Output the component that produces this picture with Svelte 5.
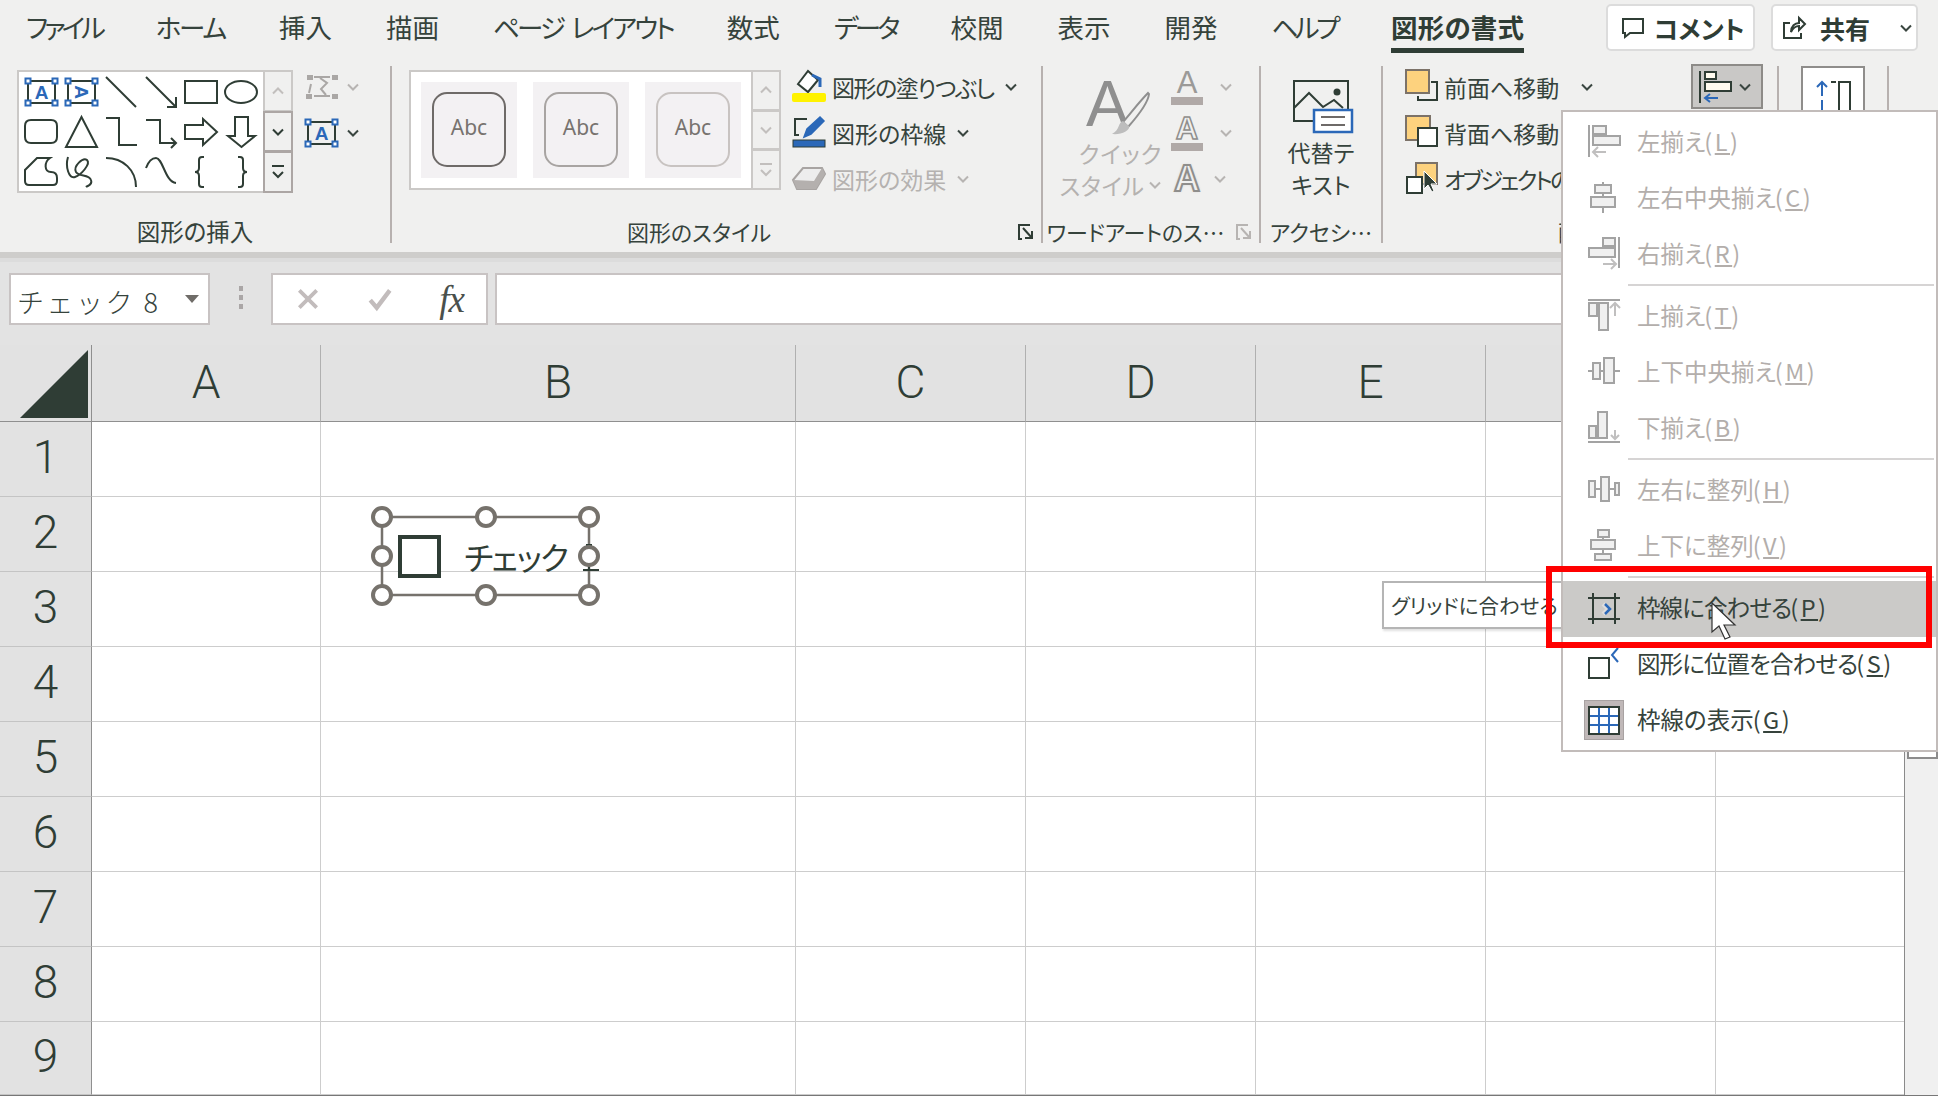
<script>
  // letter-spacing per tab: the kana in the original UI font run narrower than Noto's
  const tabs = [
    { name: 'ファイル', tight: -4 },
    { name: 'ホーム', tight: -2.2 },
    { name: '挿入', tight: 0 },
    { name: '描画', tight: 0 },
    { name: 'ページ レイアウト', tight: -2.8 },
    { name: '数式', tight: 0 },
    { name: 'データ', tight: -3.8 },
    { name: '校閲', tight: 0 },
    { name: '表示', tight: 0 },
    { name: '開発', tight: 0 },
    { name: 'ヘルプ', tight: -3.5 }
  ];

  // shape gallery: 6 x 3, drawn in a 40px cell
  const shapes = [
    { box: true },
    { box: true, turned: true },
    { d: 'M5 5L35 35' },
    { d: 'M5 5L35 35M35 25V35H26' },
    { d: 'M4 9H36V31H4Z' },
    { d: 'M4 20A16 11 0 1 0 36 20A16 11 0 1 0 4 20Z' },
    { d: 'M10 8H30Q36 8 36 14V25Q36 31 30 31H10Q4 31 4 25V14Q4 8 10 8Z' },
    { d: 'M20.5 5L36 35H5Z' },
    { d: 'M5 6H18V33H36' },
    { d: 'M5 8H19V31H35M30 26L35 31L30 36' },
    { d: 'M4 13H22V7L36 20L22 33V27H4Z' },
    { d: 'M14 5H27V24H34L20.5 35L7 24H14Z' },
    { d: 'M16 6H29C23 10 23 20 30 20C34 20 36 22 36 26V29Q36 33 32 33H8Q4 33 4 29V18Z' },
    { d: 'M7 5C4 15 8 27 14 25C20 23 30 12 26 8C22 5 12 14 15 20C18 25 28 22 30 28C32 33 26 34 25 35' },
    { d: 'M5 6C22 6 35 18 35 35' },
    { d: 'M5 16C8 8 12 6 15 6C22 6 24 30 35 31' },
    { d: 'M23 5H21Q18 5 18 8V16Q18 20 14 20Q18 20 18 24V32Q18 35 21 35H23' },
    { d: 'M17 5H19Q22 5 22 8V16Q22 20 26 20Q22 20 22 24V32Q22 35 19 35H17' }
  ];

  const swatches = ['#6e6a68', '#a8a4a2', '#c8c3c1'];

  const menu = [
    [
      { label: '左揃え', key: 'L', rects: [[5, 1, 13, 8], [5, 11, 27, 9]], line: 'M1 0V32', arrow: 'M18 27H5M10 22L5 27L10 32' },
      { label: '左右中央揃え', key: 'C', rects: [[7, 4, 16, 8], [3, 16, 24, 10]], line: 'M15 1V4M15 12V16M15 26V32' },
      { label: '右揃え', key: 'R', rects: [[15, 1, 12, 8], [1, 11, 26, 9]], line: 'M31 0V31', arrow: 'M15 27H28M23 22L28 27L23 32' }
    ],
    [
      { label: '上揃え', key: 'T', rects: [[1, 4, 8, 13], [11, 4, 9, 27]], line: 'M0 1H32', arrow: 'M27 17V4M22 9L27 4L32 9' },
      { label: '上下中央揃え', key: 'M', rects: [[5, 8, 7, 16], [16, 3, 10, 25]], line: 'M0 16H5M12 16H16M26 16H32' },
      { label: '下揃え', key: 'B', rects: [[1, 15, 7, 12], [10, 1, 9, 26]], line: 'M0 31H32', arrow: 'M27 19V28M23 24L27 28L31 24' }
    ],
    [
      { label: '左右に整列', key: 'H', rects: [[1, 8, 6, 16], [13, 4, 8, 24], [27, 10, 4, 12]], line: 'M7 16H13M21 16H27' },
      { label: '上下に整列', key: 'V', rects: [[10, 1, 11, 7], [3, 11, 24, 9], [7, 25, 16, 6]], line: 'M15 8V11M15 20V25' }
    ],
    [
      { label: '枠線に合わせる', key: 'P', enabled: true, hover: true, narrow: true, special: 'grid' },
      { label: '図形に位置を合わせる', key: 'S', enabled: true, narrow: true, special: 'shape' },
      { label: '枠線の表示', key: 'G', enabled: true, special: 'lines' }
    ]
  ];

  const columns = ['A', 'B', 'C', 'D', 'E', 'F', 'G'];
  const rows = [1, 2, 3, 4, 5, 6, 7, 8, 9];
  const handles = [[10, 10], [114, 10], [217, 10], [10, 49], [217, 49], [10, 88], [114, 88], [217, 88]];
</script>

{#snippet chevron(tone = '')}
  <svg class="chevron {tone}" viewBox="0 0 12 8" width="12" height="8"><path d="M1 1.5L6 6.5L11 1.5" /></svg>
{/snippet}

{#snippet launcher(tone = '')}
  <svg class="launcher {tone}" viewBox="0 0 16 16" width="16" height="16"><path d="M12 1H1V15H4M5 4L14 14M14 7V14H7" /></svg>
{/snippet}

{#snippet scroller(dark)}
  <div class="scroller">
    <div class="scroll-btn up"><svg viewBox="0 0 12 8" width="12" height="8"><path d="M1 6.5L6 1.5L11 6.5" /></svg></div>
    <div class="scroll-btn mid" class:dark><svg viewBox="0 0 12 8" width="12" height="8"><path d="M1 1.5L6 6.5L11 1.5" /></svg></div>
    <div class="scroll-btn more" class:dark><svg viewBox="0 0 12 16" width="12" height="16"><path d="M0 2H12M1 8L6 13L11 8" /></svg></div>
  </div>
{/snippet}

{#snippet textBox(x, y, turned)}
  <g transform="translate({x} {y})">
    <rect class="ink" x="3" y="1" width="27" height="22" />
    <text class="box-a" x="16.5" y="18.5" transform={turned ? 'rotate(90 16.5 12)' : ''}>A</text>
    {#each [[3, 1], [30, 1], [3, 23], [30, 23]] as [hx, hy]}
      <rect class="handle" x={hx - 2.5} y={hy - 2.5} width="5" height="5" />
    {/each}
  </g>
{/snippet}

<div class="app">
  <header class="tabs">
    {#each tabs as tab}
      <span class="tab" style="letter-spacing: {tab.tight}px">{tab.name}</span>
    {/each}
    <span class="tab active">図形の書式</span>
    <div class="actions">
      <button class="comment">
        <svg viewBox="0 0 24 22" width="24" height="22"><path d="M2 2H22V16H9L4 20V16H2Z" /></svg>
        コメント
      </button>
      <button class="share">
        <svg viewBox="0 0 24 24" width="24" height="24"><path d="M8 7H2V22H19V17M9 16C9 10 13 7 17 7V2L23 8L17 14V10C13 10 11 12 9 16Z" /></svg>
        共有
        {@render chevron()}
      </button>
    </div>
  </header>

  <section class="ribbon">
    <div class="group g-insert">
      <div class="body">
        <div class="gallery shape-gallery">
          <div class="shape-grid">
            {#each shapes as shape}
              <svg class="shape-cell" viewBox="0 0 40 40" width="40" height="40">
                {#if shape.box}
                  {@render textBox(4, 8, shape.turned)}
                {:else}
                  <path class="ink" d={shape.d} />
                {/if}
              </svg>
            {/each}
          </div>
          {@render scroller(true)}
        </div>
        <div class="stack">
          <div class="row side-row">
            <svg viewBox="0 0 34 28" width="34" height="28" class="edit-icon">
              <path d="M9 4H25M6 11L4 20M15 5L22 10L16 16L21 22M9 23H25" />
              <rect x="2" y="2" width="6" height="5" /><rect x="27" y="2" width="6" height="5" />
              <rect x="1" y="21" width="6" height="5" /><rect x="27" y="21" width="6" height="5" />
            </svg>
            {@render chevron('off')}
          </div>
          <div class="row side-row">
            <svg viewBox="0 0 34 28" width="34" height="28">{@render textBox(0, 2, false)}</svg>
            {@render chevron()}
          </div>
        </div>
      </div>
      <div class="label-row"><span class="label">図形の挿入</span></div>
    </div>
    <i class="sep"></i>

    <div class="group g-style">
      <div class="body">
        <div class="gallery style-gallery">
          <div class="swatches">
            {#each swatches as color}
              <div class="swatch"><div class="swatch-box" style="border-color: {color}">Abc</div></div>
            {/each}
          </div>
          {@render scroller(false)}
        </div>
        <div class="stack fills">
          <div class="row">
            <svg viewBox="0 0 34 36" width="34" height="36">
              <path class="ink thin white" d="M6 15L16 2L26 11L16 23Z" />
              <path class="blue-line" d="M20 6L28 10V18" />
              <rect x="0" y="24" width="34" height="9" rx="2" fill="#fff200" />
            </svg>
            <span class="tight">図形の塗りつぶし</span>{@render chevron()}
          </div>
          <div class="row">
            <svg viewBox="0 0 34 36" width="34" height="36">
              <path class="ink thin" d="M15 4H3V20H7" />
              <path d="M12 22L15 14L28 2L32 6L19 19Z" fill="#2b68b8" stroke="#2b68b8" stroke-width="1.5" />
              <rect x="1" y="25" width="32" height="7" fill="#2b68b8" stroke="#2f3d35" />
            </svg>
            <span>図形の枠線</span>{@render chevron()}
          </div>
          <div class="row off">
            <svg viewBox="0 0 34 36" width="34" height="36">
              <path d="M1 19L11 7H30L33 13L24 28H5Z" fill="#ededed" stroke="#a8a4a2" stroke-width="2" />
              <path d="M1 19L22 20L30 7L33 13L24 28H5Z" fill="#b4b0ae" />
            </svg>
            <span>図形の効果</span>{@render chevron('off')}
          </div>
        </div>
      </div>
      <div class="label-row launch"><span class="label">図形のスタイル</span>{@render launcher()}</div>
    </div>
    <i class="sep"></i>

    <div class="group g-art">
      <div class="body">
        <div class="quick">
          <svg class="brush" viewBox="0 0 70 62" width="70" height="62">
            <text class="big-a" x="0" y="52">A</text>
            <path d="M62 19C54 27 44 40 37 48L42 53C50 44 62 30 63 20Z" fill="#f0f0ef" stroke="#8f8f8f" stroke-width="2" />
            <path d="M26 60C35 61 44 57 43 52L37 47C32 48 34 56 26 60Z" fill="#bdbdbd" />
          </svg>
          <span class="quick-top">クイック</span>
          <span class="quick-style">スタイル{@render chevron('off')}</span>
        </div>
        <div class="stack art-list">
          <div class="row">
            <div class="art-a"><span class="a-thin">A</span><b></b></div>
            {@render chevron('off')}
          </div>
          <div class="row">
            <div class="art-a"><span class="a-outline">A</span><b></b></div>
            {@render chevron('off')}
          </div>
          <div class="row last">
            <div class="art-a"><span class="a-glow">A</span></div>
            {@render chevron('off')}
          </div>
        </div>
      </div>
      <div class="label-row launch art-label"><span class="label">ワードアートのス…</span>{@render launcher('off')}</div>
    </div>
    <i class="sep"></i>

    <div class="group g-alt">
      <div class="body alt">
        <svg viewBox="0 0 60 54" width="60" height="54">
          <rect class="ink" x="1" y="1" width="54" height="40" />
          <path class="ink" d="M1 28L16 13L30 27L41 20L50 28" />
          <circle cx="44" cy="12" r="3.5" fill="#2f3d35" />
          <rect x="21" y="30" width="38" height="22" fill="#fff" stroke="#2b68b8" stroke-width="2.5" />
          <path d="M28 37H52M28 45H52" stroke="#6e6a68" stroke-width="2" />
        </svg>
        <span>代替テ</span>
        <span>キスト</span>
      </div>
      <div class="label-row"><span class="label">アクセシ…</span></div>
    </div>
    <i class="sep"></i>

    <div class="group g-order">
      <div class="body">
        <div class="stack order-list">
          <div class="row">
            <svg viewBox="0 0 34 36" width="34" height="36">
              <path class="ink thin" d="M26 13H32V31H13V27" />
              <rect x="1" y="1" width="23" height="23" fill="#fdd27e" stroke="#7c7268" stroke-width="2" />
            </svg>
            <span>前面へ移動</span>{@render chevron()}
          </div>
          <div class="row">
            <svg viewBox="0 0 34 36" width="34" height="36">
              <rect x="1" y="1" width="24" height="24" fill="#fdd27e" stroke="#7c7268" stroke-width="2" />
              <rect x="13" y="13" width="19" height="18" fill="#fff" stroke="#2f3d35" stroke-width="2" />
            </svg>
            <span>背面へ移動</span>
          </div>
          <div class="row">
            <svg viewBox="0 0 34 36" width="34" height="36">
              <rect x="11" y="2" width="21" height="21" fill="#fdd27e" stroke="#7c7268" stroke-width="2" />
              <rect x="2" y="16" width="15" height="16" fill="#fff" stroke="#2f3d35" stroke-width="2" />
              <path d="M19 10V28L23 24L27 31L29 30L26 23H32Z" fill="#2f3d35" stroke="#fff" stroke-width="1" />
            </svg>
            <span class="tighter">オブジェクトの選択と表示</span>
          </div>
        </div>
        <div class="align-btn">
          <svg viewBox="0 0 34 34" width="34" height="34">
            <path class="ink" d="M2 1V33" />
            <rect class="ink cream" x="7" y="2" width="11" height="7" />
            <rect class="ink cream" x="7" y="12" width="26" height="9" />
            <path d="M20 28H7M12 24L7 28L12 32" fill="none" stroke="#2b68b8" stroke-width="2" />
          </svg>
          {@render chevron()}
        </div>
      </div>
      <div class="label-row"><span class="label">配置</span></div>
    </div>
    <i class="sep"></i>

    <div class="group g-size">
      <div class="size-box">
        <svg viewBox="0 0 40 40" width="40" height="40">
          <path d="M7 28V14M2 19L7 14L12 19M7 32V44" fill="none" stroke="#2b68b8" stroke-width="2" />
          <path class="ink" d="M16 14H21M24 44V14H35V44" />
        </svg>
      </div>
    </div>
    <i class="sep"></i>
  </section>

  <div class="band"></div>

  <div class="formula-bar">
    <div class="name-box"><span>チェック 8</span><i class="name-arrow"></i></div>
    <div class="dots"><i></i><i></i><i></i></div>
    <div class="fx-box">
      <svg viewBox="0 0 24 24" width="26" height="26"><path d="M4 4L20 20M20 4L4 20" fill="none" stroke="#c2bcbc" stroke-width="3.5" /></svg>
      <svg viewBox="0 0 24 24" width="26" height="26"><path d="M3 13L9 20L21 4" fill="none" stroke="#c2bcbc" stroke-width="4" /></svg>
      <span class="fx">fx</span>
    </div>
    <div class="formula-input"></div>
  </div>

  <main class="sheet">
    <div class="grid">
      <div class="corner"><i></i></div>
      {#each columns as col}
        <div class="col-head">{col}</div>
      {/each}
      {#each rows as row}
        <div class="row-head">{row}</div>
        {#each columns as col}
          <div class="cell"></div>
        {/each}
      {/each}
    </div>
    <div class="scrollbar"><i></i></div>

    <svg class="check-shape" viewBox="0 0 227 98" width="227" height="98">
      <rect class="frame" x="10" y="10" width="207" height="78" />
      <rect class="tick-box" x="28" y="30" width="39" height="39" />
      <text class="check-label" x="92" y="63">チェック</text>
      <path class="caret" d="M214 38H220M217 38V63M211 63H227" />
      {#each handles as [hx, hy]}
        <circle class="grip" cx={hx} cy={hy} r="9" />
      {/each}
    </svg>
  </main>

  <div class="tooltip">グリッドに合わせる</div>

  <nav class="menu">
    {#each menu as part, i}
      {#if i > 0}<div class="menu-sep"></div>{/if}
      {#each part as item}
        <div class="menu-item" class:enabled={item.enabled} class:hover={item.hover}>
          <svg class="menu-icon" viewBox="0 0 32 36" width="32" height="36">
            {#if item.special === 'grid'}
              <path class="ink" d="M0 7H32M0 28H32M5 2V33M27 2V33" />
              <path d="M15 13L20 18L15 23" fill="none" stroke="#dedcdc" stroke-width="4" />
              <path d="M17 13L22 18L17 23" fill="none" stroke="#2b68b8" stroke-width="2.5" />
            {:else if item.special === 'shape'}
              <rect class="ink" x="1" y="11" width="20" height="20" />
              <path d="M30 1L24 8L30 15" fill="none" stroke="#2b68b8" stroke-width="2" />
            {:else if item.special === 'lines'}
              <rect x="-3.5" y="-2.5" width="39" height="39" fill="#c0b8b8" stroke="#a8a2a2" />
              <rect x="1" y="4" width="30" height="27" fill="#fff" />
              <path d="M11 4V31M21 4V31M1 13H31M1 22H31" fill="none" stroke="#2b68b8" stroke-width="2" />
              <rect class="ink" x="1" y="4" width="30" height="27" />
            {:else}
              {#each item.rects as [x, y, w, h]}
                <rect class="off-box" {x} {y} width={w} height={h} />
              {/each}
              <path class="off-line" d={item.line} />
              {#if item.arrow}<path class="off-arrow" d={item.arrow} />{/if}
            {/if}
          </svg>
          <span class="menu-text" class:narrow={item.narrow}>{item.label}<span class="key">(<u>{item.key}</u>)</span></span>
        </div>
      {/each}
    {/each}
  </nav>

  <div class="highlight-box"></div>

  <svg class="cursor" viewBox="0 0 26 38" width="26" height="38">
    <path d="M1 1V30L8 24L14 37L19 35L13 23H24Z" fill="#fff" stroke="#333" stroke-width="1.200" />
  </svg>
</div>

<style>
  :global(body) {
    margin: 0;
    background: #fff;
  }

  .app {
    position: relative;
    width: 1938px;
    height: 1096px;
    overflow: hidden;
    display: flex;
    flex-direction: column;
    background: #f0f0ef;
    color: #36433c;
    font-family: "Noto Sans CJK JP", "Noto Sans", sans-serif;
    font-feature-settings: "palt";
    font-size: 23px;
  }

  svg {
    display: block;
    flex: none;
    overflow: visible;
  }

  .ink {
    fill: none;
    stroke: #2f3d35;
    stroke-width: 2;
  }
  .ink.thin { stroke-width: 2; }
  .ink.white { fill: #fff; }
  .ink.cream { fill: #fffbef; }
  .blue-line { fill: none; stroke: #2b68b8; stroke-width: 3; }
  .tight { letter-spacing: -1.5px; }
  .tighter { letter-spacing: -2.500px; }

  /* tabs */
  .tabs {
    height: 62px;
    flex: none;
    display: flex;
    gap: 54px;
    padding-left: 26px;
    box-sizing: border-box;
  }
  .tab {
    height: 53px;
    box-sizing: border-box;
    padding-top: 9px;
    font-size: 26.500px;
    line-height: 36px;
    white-space: nowrap;
    word-spacing: 5px;
  }
  .tab.active {
    font-weight: 700;
    border-bottom: 5px solid #2f3d35;
    color: #2f3d35;
    letter-spacing: 0.2px;
  }

  .actions {
    margin-left: auto;
    padding: 4px 20px 0 0;
    display: flex;
    gap: 16px;
  }
  .actions button {
    height: 47px;
    box-sizing: border-box;
    display: flex;
    align-items: center;
    background: #fff;
    border: 2px solid #dcdcdc;
    border-radius: 5px;
    font: inherit;
    font-size: 25px;
    font-weight: 700;
    color: #2f3d35;
    padding: 0;
  }
  .actions button svg:first-child path {
    fill: none;
    stroke: #2f3d35;
    stroke-width: 2;
  }
  .comment {
    width: 149px;
    padding-left: 13px !important;
    gap: 9px;
  }
  .share {
    width: 147px;
    padding-left: 9px !important;
    gap: 14px;
  }
  .share .chevron {
    margin-left: 16px;
  }

  .chevron path {
    fill: none;
    stroke: #3a4640;
    stroke-width: 2;
  }
  .chevron.off path {
    stroke: #b7b4b2;
  }

  .launcher path {
    fill: none;
    stroke: #2f3d35;
    stroke-width: 2;
  }
  .launcher.off path {
    stroke: #b7b4b2;
  }

  /* ribbon */
  .ribbon {
    height: 190px;
    flex: none;
    display: flex;
  }
  .sep {
    width: 2px;
    flex: none;
    margin: 4px 0 9px;
    background: #b7b1af;
  }
  .group {
    flex: none;
    display: flex;
    flex-direction: column;
  }
  .body {
    height: 156px;
    display: flex;
  }
  .label-row {
    height: 32px;
    box-sizing: border-box;
    padding-bottom: 5px;
    display: flex;
    align-items: center;
    justify-content: center;
    font-size: 22px;
    line-height: 27px;
    white-space: nowrap;
  }
  .g-insert .label-row {
    font-size: 23.500px;
  }
  .label-row.launch {
    padding-right: 7px;
    font-size: 22px;
  }
  .label-row.launch .label {
    flex: 1;
    text-align: center;
  }
  .label-row.launch .launcher {
    margin-left: 12px;
  }
  .art-label .label {
    letter-spacing: -0.2px;
    padding-left: 4px;
  }

  .g-insert { width: 390px; }
  .g-style { width: 649px; }
  .g-art { width: 216px; }
  .g-alt { width: 120px; }
  .g-order { width: 394px; }
  .g-size { width: 108px; }

  .g-insert .body { padding: 8px 0 0 17px; box-sizing: border-box; }
  .g-style .body { padding: 8px 0 0 17px; box-sizing: border-box; }

  .gallery {
    display: flex;
    background: #fff;
    border: 2px solid #cbc9c7;
    box-sizing: border-box;
  }
  .shape-gallery {
    width: 276px;
    height: 123px;
  }
  .shape-grid {
    width: 244px;
    padding: 0 0 0 2px;
    box-sizing: border-box;
    display: grid;
    grid-template-columns: repeat(6, 40px);
    grid-auto-rows: 40px;
  }
  .box-a {
    font-family: "Liberation Sans", sans-serif;
    font-size: 19px;
    font-weight: 700;
    fill: #2b68b8;
    text-anchor: middle;
  }
  .handle {
    fill: #fff;
    stroke: #2b68b8;
    stroke-width: 2;
  }

  .scroller {
    flex: none;
    width: 30px;
    margin: -2px -2px -2px auto;
    display: flex;
    flex-direction: column;
    background: #f0f0ef;
  }
  .scroll-btn {
    flex: 1;
    display: flex;
    align-items: center;
    justify-content: center;
    box-sizing: border-box;
    border: 2px solid #cbc9c7;
  }
  .scroll-btn + .scroll-btn {
    margin-top: -1px;
  }
  .scroll-btn path {
    fill: none;
    stroke: #c2bfbd;
    stroke-width: 2;
  }
  .scroll-btn.dark {
    border-color: #aca6a4;
  }
  .scroll-btn.dark path {
    stroke: #2f3d35;
  }

  .stack {
    margin-top: -6px;
    display: flex;
    flex-direction: column;
  }
  .row {
    height: 46px;
    display: flex;
    align-items: center;
    white-space: nowrap;
  }
  .row.off {
    color: #b5b2b0;
  }

  .side-row {
    margin-left: 12px;
    gap: 8px;
  }
  .edit-icon path {
    fill: none;
    stroke: #aaa7a5;
    stroke-width: 2;
  }
  .edit-icon rect {
    fill: #aaa7a5;
  }

  .style-gallery {
    width: 372px;
    height: 120px;
  }
  .swatches {
    display: flex;
    gap: 16px;
    padding: 10px 0 0 10px;
  }
  .swatch {
    width: 96px;
    height: 96px;
    box-sizing: border-box;
    padding: 10px 11px;
    background: #f3f1f3;
  }
  .swatch-box {
    height: 75px;
    box-sizing: border-box;
    border: 2px solid;
    border-radius: 15px;
    display: flex;
    align-items: center;
    justify-content: center;
    font-family: "Noto Sans", sans-serif;
    font-size: 21px;
    color: #77736f;
    padding-bottom: 6px;
  }

  .fills {
    margin-left: 11px;
  }
  .fills span {
    margin: 0 11px 0 6px;
  }

  .quick {
    width: 125px;
    height: 156px;
    flex: none;
    box-sizing: border-box;
    padding-left: 16px;
    display: flex;
    flex-direction: column;
    align-items: center;
    color: #b5b2b0;
    line-height: 32px;
    letter-spacing: 1px;
  }
  .brush {
    margin: 12px 0 1px 14px;
  }
  .big-a {
    font-family: "Liberation Sans", sans-serif;
    font-size: 64px;
    fill: #8f8f8f;
  }
  .quick-top {
    margin-left: 14px;
  }
  .quick-style {
    display: flex;
    align-items: center;
    gap: 5px;
    white-space: nowrap;
    letter-spacing: 0.5px;
    margin-left: -6px;
  }

  .art-list {
    margin-top: 2px;
  }
  .art-list .row {
    gap: 16px;
  }
  .art-list .row.last {
    gap: 10px;
  }
  .art-a {
    width: 34px;
    margin-left: 2px;
    display: flex;
    flex-direction: column;
    align-items: center;
    font-family: "Liberation Sans", sans-serif;
    color: #9b9a98;
  }
  .art-a span {
    font-size: 31px;
    line-height: 28px;
  }
  .art-a b {
    width: 32px;
    height: 8px;
    background: #b0a9a7;
  }
  .a-outline {
    font-weight: 700;
    color: #f0f0ef;
    -webkit-text-stroke: 1.5px #8f8e8c;
  }
  .a-glow {
    font-weight: 700;
    font-size: 36px !important;
    color: #f0f0ef;
    -webkit-text-stroke: 2px #8f8e8c;
    text-shadow: 0 0 3px #bbb;
  }

  .alt {
    flex-direction: column;
    align-items: center;
    line-height: 32px;
  }
  .alt svg {
    margin: 18px 0 2px 4px;
  }

  .order-list {
    width: 286px;
    flex: none;
    margin: 2px 0 0 22px;
  }
  .order-list span {
    margin: 0 22px 0 5px;
  }
  .align-btn {
    width: 72px;
    height: 45px;
    margin-top: 2px;
    flex: none;
    box-sizing: border-box;
    background: #c9c8c6;
    border: 2px solid #8d8b88;
    display: flex;
    align-items: center;
    gap: 7px;
    padding-left: 5px;
  }

  .g-size {
    padding: 4px 0 0 22px;
    box-sizing: border-box;
  }
  .size-box {
    width: 64px;
    height: 100px;
    box-sizing: border-box;
    border: 2px solid #8f8d8b;
    background: #fff;
    padding: 0 0 0 12px;
  }

  .band {
    height: 10px;
    flex: none;
    background: linear-gradient(#cecdcb 60%, #dcdcdc 60%);
  }

  /* formula bar */
  .formula-bar {
    height: 83px;
    flex: none;
    box-sizing: border-box;
    padding: 11px 18px 20px 9px;
    display: flex;
    background: #e3e3e3;
  }
  .name-box {
    width: 201px;
    box-sizing: border-box;
    background: #fff;
    border: 2px solid #c8c3c3;
    padding-left: 6px;
    display: flex;
    align-items: center;
    font-size: 27px;
    font-feature-settings: normal;
    font-weight: 300;
  }
  .name-box span {
    white-space: nowrap;
    letter-spacing: 2.500px;
    padding-top: 4px;
  }
  .name-arrow {
    margin: 0 9px 0 auto;
    border: 7px solid transparent;
    border-top: 8px solid #6f6c68;
    border-bottom: 0;
  }
  .dots {
    width: 61px;
    display: flex;
    flex-direction: column;
    justify-content: center;
    align-items: center;
    gap: 4px;
    padding-bottom: 4px;
    box-sizing: border-box;
  }
  .dots i {
    width: 4px;
    height: 5px;
    background: #aaa6a6;
  }
  .fx-box {
    width: 217px;
    flex: none;
    box-sizing: border-box;
    background: #fff;
    border: 2px solid #c8c3c3;
    display: flex;
    align-items: center;
    justify-content: space-between;
    padding: 0 22px 0 22px;
  }
  .fx {
    font-family: "Liberation Serif", serif;
    font-style: italic;
    font-size: 37px;
    color: #4a504c;
    letter-spacing: -1px;
  }
  .formula-input {
    flex: 1;
    margin-left: 7px;
    background: #fff;
    border: 2px solid #c8c3c3;
  }

  /* sheet */
  .sheet {
    position: relative;
    flex: 1;
    min-height: 0;
    display: flex;
    box-sizing: border-box;
    border-bottom: 1px solid #777;
    background: #f0f0f0;
  }
  .grid {
    flex: none;
    width: 1905px;
    display: grid;
    grid-template-columns: 92px 229px 475px 230px 230px 230px 230px 189px;
    grid-template-rows: 77px repeat(8, 75px) 1fr;
    overflow: hidden;
    background: #fff;
    border-right: 1px solid #8a8a8a;
    box-sizing: border-box;
  }
  .corner {
    background: #e2e2e2;
    border-right: 1px solid #8f8f8f;
    border-bottom: 1px solid #8f8f8f;
    position: relative;
  }
  .corner i {
    position: absolute;
    left: 20px;
    bottom: 3px;
    border-style: solid;
    border-width: 0 0 68px 68px;
    border-color: transparent transparent #2f3d35 transparent;
  }
  .col-head {
    background: #e2e2e2;
    border-right: 1px solid #b0b0b0;
    border-bottom: 1px solid #8f8f8f;
    display: flex;
    align-items: center;
    justify-content: center;
    padding-bottom: 2px;
    font-family: Roboto, "Noto Sans", sans-serif;
    font-weight: 300;
    font-size: 46px;
    color: #2f3d35;
  }
  .row-head {
    background: #e2e2e2;
    border-right: 1px solid #8f8f8f;
    border-bottom: 1px solid #c4c4c4;
    display: flex;
    align-items: center;
    justify-content: center;
    padding-bottom: 4px;
    font-family: Roboto, "Noto Sans", sans-serif;
    font-weight: 300;
    font-size: 46px;
    color: #2f3d35;
  }
  .cell {
    border-right: 1px solid #cdcdcd;
    border-bottom: 1px solid #cdcdcd;
  }
  .scrollbar {
    flex: 1;
    padding-left: 2px;
  }
  .scrollbar i {
    display: block;
    height: 414px;
    box-sizing: border-box;
    border: 2px solid #8c8c8c;
    background: #fff;
  }

  .check-shape {
    position: absolute;
    left: 372px;
    top: 162px;
  }
  .frame {
    fill: none;
    stroke: #76726c;
    stroke-width: 2.5;
  }
  .tick-box {
    fill: #fff;
    stroke: #2f3d35;
    stroke-width: 4;
  }
  .check-label {
    font-size: 32px;
    letter-spacing: -1.500px;
    fill: #2f3d35;
  }
  .caret {
    fill: none;
    stroke: #2f3d35;
    stroke-width: 2;
  }
  .grip {
    fill: #fff;
    stroke: #76726c;
    stroke-width: 4;
  }

  /* overlays */
  .tooltip {
    position: absolute;
    left: 1382px;
    top: 581px;
    width: 181px;
    height: 48px;
    box-sizing: border-box;
    border: 2px solid #b5b5b5;
    background: #fff;
    padding-left: 7px;
    font-size: 20.500px;
    line-height: 44px;
    white-space: nowrap;
    overflow: hidden;
    box-shadow: 1px 2px 2px rgba(0, 0, 0, 0.12);
  }
  .menu {
    position: absolute;
    left: 1561px;
    top: 110px;
    width: 377px;
    height: 642px;
    box-sizing: border-box;
    padding-top: 3px;
    background: #fff;
    border: 2px solid #c2bcba;
    color: #b3aeab;
  }
  .menu-item {
    height: 56px;
    display: flex;
    align-items: center;
    gap: 17px;
    padding-left: 25px;
    font-size: 23.500px;
    white-space: nowrap;
  }
  .menu-text {
    padding-bottom: 4px;
  }
  .menu-text.narrow {
    letter-spacing: -0.9px;
  }
  .key {
    letter-spacing: 2.500px;
    margin-left: -1px;
  }
  .menu-item.enabled {
    color: #36433c;
  }
  .menu-item.hover {
    background: #cbcac8;
  }
  .menu-sep {
    height: 6px;
    margin-left: 65px;
    margin-right: 2px;
    box-sizing: border-box;
    border-top: 2px solid #d6d4d4;
    transform: translateY(1px);
  }
  .off-box {
    fill: #f0f0f0;
    stroke: #a3a3a3;
    stroke-width: 2;
  }
  .off-line {
    fill: none;
    stroke: #a3a3a3;
    stroke-width: 2;
  }
  .off-arrow {
    fill: none;
    stroke: #c0bfbf;
    stroke-width: 2;
  }
  .highlight-box {
    position: absolute;
    left: 1546px;
    top: 566px;
    width: 386px;
    height: 82px;
    box-sizing: border-box;
    border: 6px solid #ff0000;
  }
  .cursor {
    position: absolute;
    left: 1711px;
    top: 602px;
  }
</style>
